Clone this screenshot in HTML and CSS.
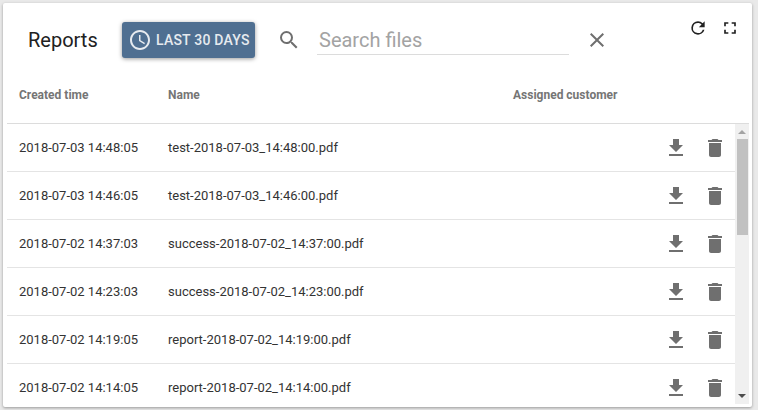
FILE: index.html
```html
<!DOCTYPE html>
<html lang="en">
<head>
<meta charset="utf-8">
<title>Reports</title>
<link rel="stylesheet" href="styles.css">
</head>
<body>
<main class="card">
  <div class="corner">
    <svg class="ci" viewBox="0 0 24 24"><path d="M17.65 6.35A7.96 7.96 0 0 0 12 4a8 8 0 1 0 7.73 10h-2.08A6 6 0 1 1 12 6c1.66 0 3.14.69 4.22 1.78L13 11h7V4l-2.35 2.35z"/></svg>
    <svg class="ci" viewBox="0 0 24 24"><path d="M7 14H5v5h5v-2H7v-3zm-2-4h2V7h3V5H5v5zm12 7h-3v2h5v-5h-2v3zM14 5v2h3v3h2V5h-5z"/></svg>
  </div>
  <header class="toolbar">
    <h1 class="title">Reports</h1>
    <button class="range">
      <svg class="clock" viewBox="0 0 24 24"><path d="M11.99 2C6.47 2 2 6.48 2 12s4.47 10 9.99 10C17.52 22 22 17.52 22 12S17.52 2 11.99 2zM12 20c-4.42 0-8-3.58-8-8s3.58-8 8-8 8 3.58 8 8-3.58 8-8 8zm.5-13H11v6l5.25 3.15.75-1.23-4.5-2.67V7z"/></svg>
      <span>LAST 30 DAYS</span>
    </button>
    <svg class="search-icon" viewBox="0 0 24 24"><path d="M15.5 14h-.79l-.28-.27A6.47 6.47 0 0 0 16 9.5 6.5 6.5 0 1 0 9.5 16c1.61 0 3.09-.59 4.23-1.57l.27.28v.79l5 4.99L20.49 19l-4.99-5zm-6 0C7.01 14 5 11.99 5 9.5S7.01 5 9.5 5 14 7.01 14 9.5 11.99 14 9.5 14z"/></svg>
    <div class="search">Search files</div>
    <svg class="close-icon" viewBox="0 0 24 24"><path d="M19 6.41 17.59 5 12 10.59 6.41 5 5 6.41 10.59 12 5 17.59 6.41 19 12 13.41 17.59 19 19 17.59 13.41 12z"/></svg>
  </header>
  <div class="head-row">
    <span class="c-time">Created time</span>
    <span class="c-name">Name</span>
    <span class="c-cust">Assigned customer</span>
  </div>
  <div class="body">
    <div class="rows">
      <div class="row"><span class="c-time">2018-07-03 14:48:05</span><span class="c-name">test-2018-07-03_14:48:00.pdf</span><svg class="a-dl" viewBox="0 0 24 24"><path d="M19 9h-4V3H9v6H5l7 7 7-7zM5 18v2h14v-2H5z"/></svg><svg class="a-del" viewBox="0 0 24 24"><path d="M6 19c0 1.1.9 2 2 2h8c1.1 0 2-.9 2-2V7H6v12zM19 4h-3.5l-1-1h-5l-1 1H5v2h14V4z"/></svg></div>
      <div class="row"><span class="c-time">2018-07-03 14:46:05</span><span class="c-name">test-2018-07-03_14:46:00.pdf</span><svg class="a-dl" viewBox="0 0 24 24"><path d="M19 9h-4V3H9v6H5l7 7 7-7zM5 18v2h14v-2H5z"/></svg><svg class="a-del" viewBox="0 0 24 24"><path d="M6 19c0 1.1.9 2 2 2h8c1.1 0 2-.9 2-2V7H6v12zM19 4h-3.5l-1-1h-5l-1 1H5v2h14V4z"/></svg></div>
      <div class="row"><span class="c-time">2018-07-02 14:37:03</span><span class="c-name">success-2018-07-02_14:37:00.pdf</span><svg class="a-dl" viewBox="0 0 24 24"><path d="M19 9h-4V3H9v6H5l7 7 7-7zM5 18v2h14v-2H5z"/></svg><svg class="a-del" viewBox="0 0 24 24"><path d="M6 19c0 1.1.9 2 2 2h8c1.1 0 2-.9 2-2V7H6v12zM19 4h-3.5l-1-1h-5l-1 1H5v2h14V4z"/></svg></div>
      <div class="row"><span class="c-time">2018-07-02 14:23:03</span><span class="c-name">success-2018-07-02_14:23:00.pdf</span><svg class="a-dl" viewBox="0 0 24 24"><path d="M19 9h-4V3H9v6H5l7 7 7-7zM5 18v2h14v-2H5z"/></svg><svg class="a-del" viewBox="0 0 24 24"><path d="M6 19c0 1.1.9 2 2 2h8c1.1 0 2-.9 2-2V7H6v12zM19 4h-3.5l-1-1h-5l-1 1H5v2h14V4z"/></svg></div>
      <div class="row"><span class="c-time">2018-07-02 14:19:05</span><span class="c-name">report-2018-07-02_14:19:00.pdf</span><svg class="a-dl" viewBox="0 0 24 24"><path d="M19 9h-4V3H9v6H5l7 7 7-7zM5 18v2h14v-2H5z"/></svg><svg class="a-del" viewBox="0 0 24 24"><path d="M6 19c0 1.1.9 2 2 2h8c1.1 0 2-.9 2-2V7H6v12zM19 4h-3.5l-1-1h-5l-1 1H5v2h14V4z"/></svg></div>
      <div class="row"><span class="c-time">2018-07-02 14:14:05</span><span class="c-name">report-2018-07-02_14:14:00.pdf</span><svg class="a-dl" viewBox="0 0 24 24"><path d="M19 9h-4V3H9v6H5l7 7 7-7zM5 18v2h14v-2H5z"/></svg><svg class="a-del" viewBox="0 0 24 24"><path d="M6 19c0 1.1.9 2 2 2h8c1.1 0 2-.9 2-2V7H6v12zM19 4h-3.5l-1-1h-5l-1 1H5v2h14V4z"/></svg></div>
    </div>
    <div class="scrollbar">
      <span class="arrow up"></span>
      <span class="thumb"></span>
      <span class="arrow down"></span>
    </div>
  </div>
</main>
</body>
</html>
```
FILE: styles.css
```css
* { box-sizing: border-box; }
html, body { margin: 0; height: 100%; }
body {
  width: 758px;
  height: 410px;
  overflow: hidden;
  background: #e9e9e9;
  padding: 3px 5px 3px 3px;
  font-family: Roboto, sans-serif;
}
.card {
  position: relative;
  width: 749px;
  height: 404px;
  background: #fff;
  border-radius: 2px;
  box-shadow: 0 1px 3px rgba(0,0,0,.35);
  padding: 0 3px 0 4px;
  display: flex;
  flex-direction: column;
  overflow: hidden;
}
.corner {
  position: absolute;
  top: 15px;
  right: 12px;
  display: flex;
  gap: 12px;
}
.ci { width: 20px; height: 20px; fill: #212121; display: block; }
.toolbar {
  height: 73px;
  display: flex;
  align-items: center;
  padding: 1px 0 0 21px;
  flex: none;
}
.title {
  margin: 0;
  font-size: 20px;
  font-weight: 400;
  color: #212121;
  width: 94px;
}
.range {
  width: 133px;
  height: 36px;
  border: 0;
  border-radius: 3px;
  background: #4f6f91;
  color: #e6eaef;
  font: 500 14px Roboto, sans-serif;
  letter-spacing: .22px;
  box-shadow: 0 1px 4px rgba(0,0,0,.4);
  display: flex;
  align-items: center;
  padding: 0 0 0 6px;
  gap: 4px;
}
.clock { width: 24px; height: 24px; fill: #e6eaef; flex: none; }
.search-icon { width: 24px; height: 24px; fill: #6f6f6f; margin-left: 22px; flex: none; }
.search {
  width: 252px;
  height: 30px;
  margin-left: 16px;
  padding: 2px 0 0 2px;
  border-bottom: 1px solid #dcdcdc;
  font-size: 20px;
  line-height: 26px;
  color: #a3a3a3;
}
.close-icon { width: 24px; height: 24px; fill: #6f6f6f; margin-left: 16px; flex: none; }
.head-row {
  height: 48px;
  flex: none;
  display: flex;
  align-items: center;
  font-size: 12px;
  font-weight: 700;
  color: #757575;
  border-bottom: 1px solid #dcdcdc;
  padding-bottom: 10px;
}
.c-time { margin-left: 12px; width: 149px; flex: none; }
.c-name { flex: none; width: 345px; }
.c-cust { flex: none; }
.body { display: flex; flex: 1; min-height: 0; }
.rows { width: 728px; overflow: hidden; flex: none; }
.row {
  height: 48px;
  display: flex;
  align-items: center;
  font-size: 13px;
  color: #333;
  border-bottom: 1px solid #e4e4e4;
}
.a-dl, .a-del { width: 24px; height: 24px; fill: #6f6f6f; flex: none; }
.a-dl { margin-left: 151px; }
.a-del { margin-left: 15px; }
.scrollbar {
  width: 15px;
  background: #f0f0f0;
  height: 280px;
  display: flex;
  flex-direction: column;
  align-items: center;
  position: relative;
}
.arrow { width: 0; height: 0; border-left: 4px solid transparent; border-right: 4px solid transparent; flex: none; }
.arrow.up { border-bottom: 4px solid #a3a3a3; margin-top: 6px; }
.arrow.down { border-top: 4px solid #4d4d4d; margin-top: auto; margin-bottom: 6px; }
.thumb { width: 11px; height: 96px; background: #c1c1c1; margin-top: 5px; flex: none; }
```
